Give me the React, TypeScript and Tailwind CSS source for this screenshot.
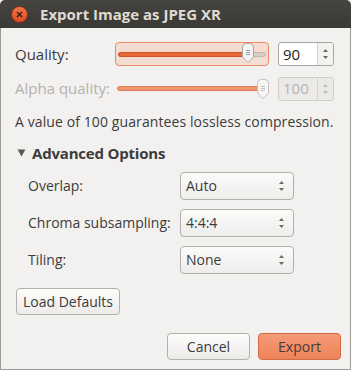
import React from 'react'

const font = { fontFamily: '"Open Sans", "Noto Sans", sans-serif' }

// slider knob, rounded top and pointed bottom
const Knob = ({ dim }: { dim?: boolean }) => (
	<svg width="14" height="20" viewBox="0 0 14 20" className="absolute top-1/2 -translate-y-1/2">
		<path
			d="M1.5 4 Q1.5 0.5 5 0.5 L9 0.5 Q12.5 0.5 12.5 4 L12.5 14 L7 19.5 L1.5 14 Z"
			fill={dim ? '#f7f6f5' : '#f4f3f1'}
			stroke={dim ? '#c4c2bf' : '#a9a7a3'} />
		<path d="M5 7.5 H9 M5 9.5 H9 M5 11.5 H9" stroke={dim ? '#b4b2ae' : '#8a8884'} strokeWidth="0.8" />
	</svg>
)

const Arrows = ({ dim }: { dim?: boolean }) => (
	<svg width="7" height="12" viewBox="0 0 7 12">
		<path d="M3.5 1 L6 4 H1 Z" fill={dim ? '#bdbbb8' : '#6b6a67'} />
		<path d="M3.5 11 L6 8 H1 Z" fill={dim ? '#bdbbb8' : '#6b6a67'} />
	</svg>
)

const SpinBox = ({ value, dim }: { value: string, dim?: boolean }) => (
	<div className={`flex w-[56px] h-[24px] rounded-[3px] border ${dim ? 'border-[#cfcdca] bg-[#eceae8]' : 'border-[#a8a6a2] bg-white'}`}>
		<div className={`flex-1 pl-[4px] flex items-center text-[15px] ${dim ? 'text-[#b5b3b0]' : 'text-[#1e1e1e]'}`}>{value}</div>
		<div className={`w-[16px] flex items-center justify-center border-l ${dim ? 'border-[#d6d4d1] bg-[#eceae8]' : 'border-[#d4d2cf] bg-[#f4f3f1]'} rounded-r-[3px]`}>
			<Arrows dim={dim} />
		</div>
	</div>
)

const Combo = ({ value }: { value: string }) => (
	<div className="flex items-center justify-between w-[114px] h-[28px] px-[5px] rounded-[4px] border border-[#b2b0ac] bg-gradient-to-b from-[#fbfbfa] to-[#eeedeb] text-[14px] text-[#3c3c3c]">
		<span>{value}</span>
		<span className="pr-[3px]"><Arrows /></span>
	</div>
)

const Button = ({ label, primary, className }: { label: string, primary?: boolean, className?: string }) => (
	<div className={`flex items-center justify-center h-[27px] rounded-[4px] border text-[14px] ${primary
		? 'border-[#d4693f] bg-gradient-to-b from-[#f59a78] to-[#ef8358] text-[#4a3a33]'
		: 'border-[#b2b0ac] bg-gradient-to-b from-[#fdfdfc] to-[#ecebe9] text-[#3c3c3c]'} ${className ?? ''}`}>
		{label}
	</div>
)

const App = () => {
	return (
		<div className="w-[351px] h-[370px] flex flex-col bg-[#f2f1f0] overflow-hidden" style={font}>
			{/* title bar */}
			<div className="h-[28px] flex items-center rounded-t-[5px] bg-gradient-to-b from-[#45443f] to-[#3a3935] shrink-0">
				<div className="ml-[11px] w-[17px] h-[17px] rounded-full bg-gradient-to-b from-[#f2764e] to-[#d84a22] border border-[#8c2e14] flex items-center justify-center">
					<svg width="7" height="7" viewBox="0 0 7 7">
						<path d="M1 1 L6 6 M6 1 L1 6" stroke="#3a1a10" strokeWidth="1.4" />
					</svg>
				</div>
				<span className="ml-[12px] text-[15px] font-bold text-[#dfdbd2]">Export Image as JPEG XR</span>
			</div>

			<div className="flex-1 flex flex-col border-x border-b border-[#9c9a97] text-[14px] text-[#3c3c3c]">
				{/* quality */}
				<div className="flex items-center mt-[14px] h-[24px]">
					<span className="ml-[14px] w-[100px] text-[15px]">Quality:</span>
					<div className="relative w-[154px] h-[24px] rounded-[4px] border border-[#ee8a63] bg-[#f5dcd0]">
						<div className="absolute left-[2px] right-[2px] top-[9px] h-[5px] rounded-full bg-[#d8cfc9] border border-[#c2b7b0]" />
						<div className="absolute left-[2px] w-[130px] top-[9px] h-[5px] rounded-full bg-[#e8683a] border border-[#c9532a]" />
						<div className="absolute left-[125px] top-[10px]"><Knob /></div>
					</div>
					<div className="ml-[9px]"><SpinBox value="90" /></div>
				</div>

				{/* alpha quality */}
				<div className="flex items-center mt-[11px] h-[23px]">
					<span className="ml-[14px] w-[101px] text-[15px] text-[#b4b2ae]">Alpha quality:</span>
					<div className="relative w-[153px] h-[23px]">
						<div className="absolute left-[1px] w-[146px] top-[9px] h-[5px] rounded-full bg-[#ef9672] border border-[#e07b55]" />
						<div className="absolute left-[140px] top-[12px]"><Knob dim /></div>
					</div>
					<div className="ml-[9px]"><SpinBox value="100" dim /></div>
				</div>

				<p className="ml-[14px] mt-[12px] text-[14px] leading-[20px] tracking-[0.1px]">A value of 100 guarantees lossless compression.</p>

				<div className="flex items-center mt-[10px] ml-[16px]">
					<svg width="9" height="8" viewBox="0 0 9 8"><path d="M0.5 0.5 H8.5 L4.5 7.5 Z" fill="#5b5a56" /></svg>
					<span className="ml-[6px] font-bold text-[15px] tracking-[-0.2px]">Advanced Options</span>
				</div>

				<div className="flex flex-col gap-[9px] mt-[7px] ml-[27px]">
					{[['Overlap:', 'Auto'], ['Chroma subsampling:', '4:4:4'], ['Tiling:', 'None']].map(([l, v]) => (
						<div key={l} className="flex items-center">
							<span className="w-[152px]">{l}</span>
							<Combo value={v} />
						</div>
					))}
				</div>

				<div className="flex mt-[14px] ml-[15px]">
					<Button label="Load Defaults" className="w-[104px]" />
				</div>

				<div className="flex justify-end gap-[8px] mt-[18px] mr-[9px]">
					<Button label="Cancel" className="w-[83px]" />
					<Button label="Export" primary className="w-[83px]" />
				</div>
			</div>
		</div>
	)
}

export default App
